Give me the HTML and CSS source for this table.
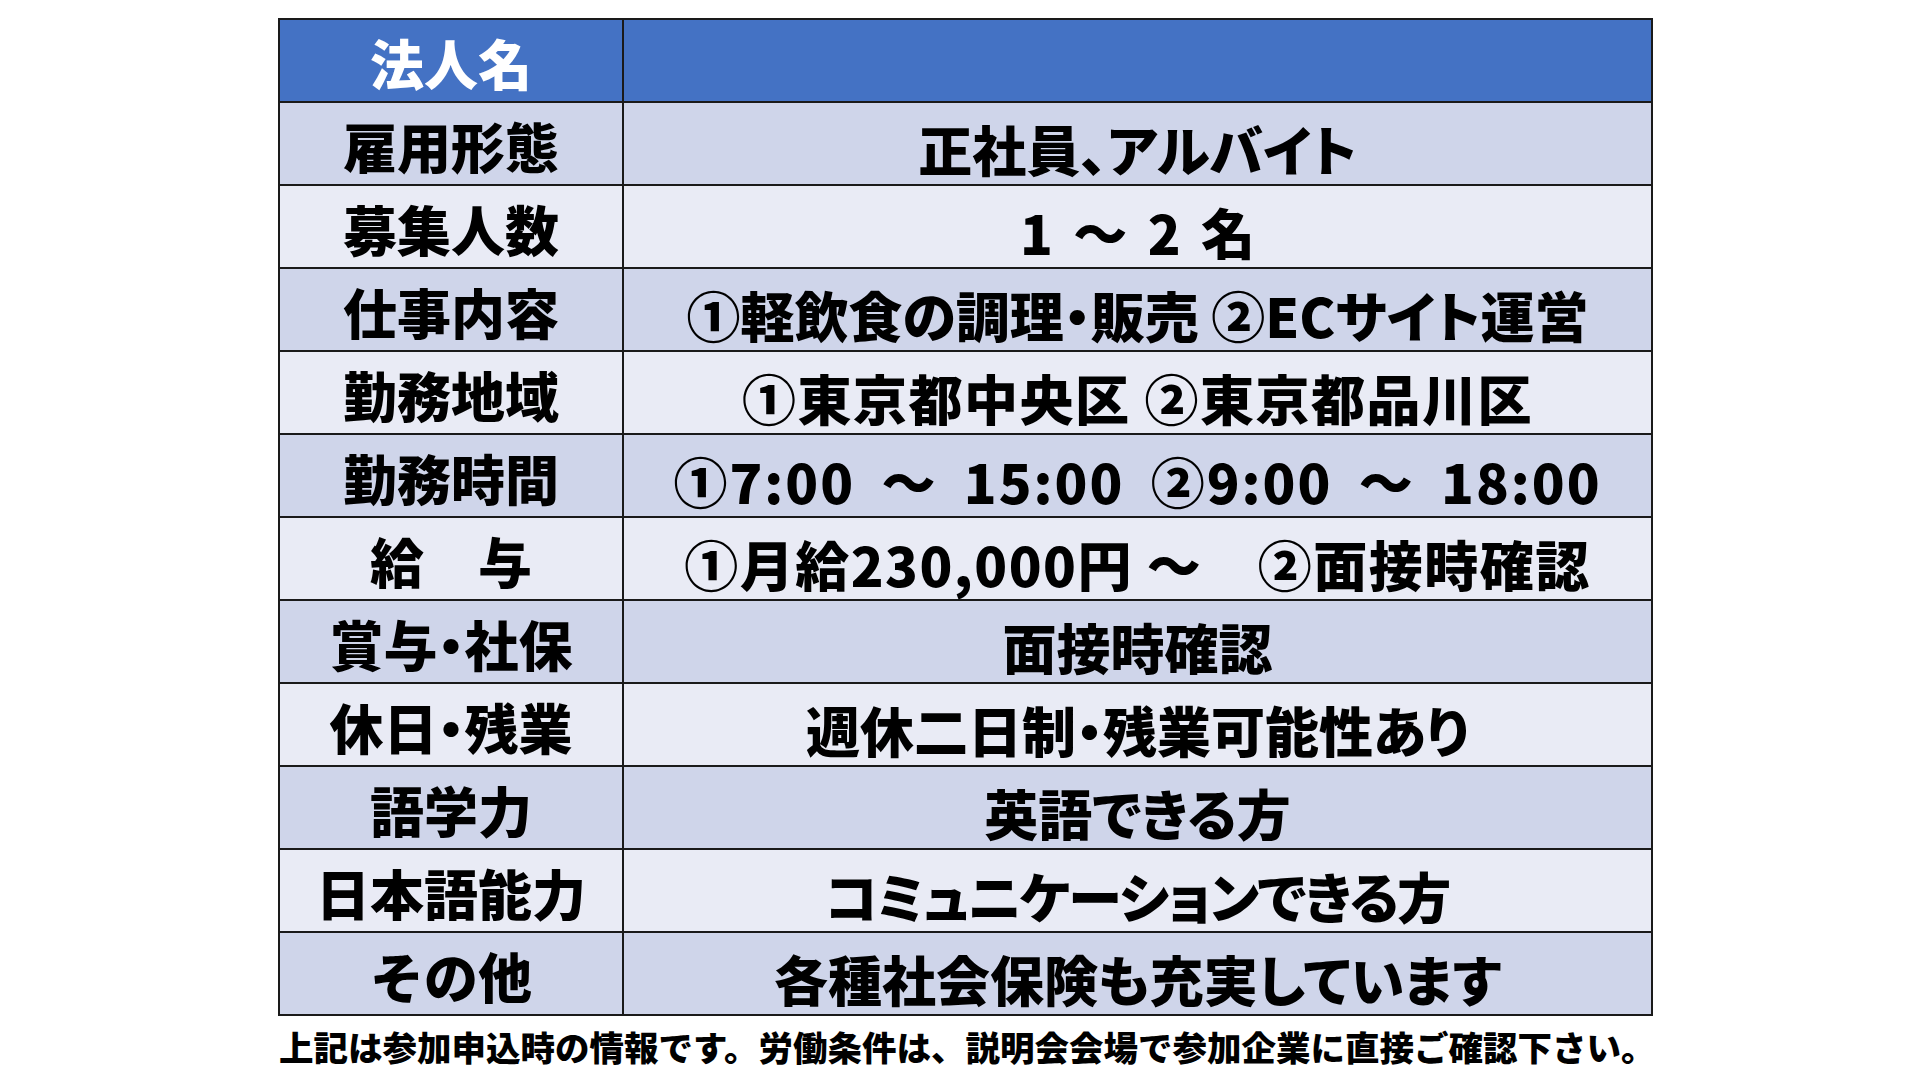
FILE: index.html
```html
<!DOCTYPE html>
<html lang="ja">
<head>
<meta charset="utf-8">
<title>求人情報</title>
<link rel="stylesheet" href="styles.css">
</head>
<body>
<div class="page">
  <table class="job">
    <tr class="head"><th class="label">法人名</th><td class="value"></td></tr>
    <tr class="dark"><th class="label">雇用形態</th><td class="value">正社員、アルバイト</td></tr>
    <tr class="light"><th class="label">募集人数</th><td class="value spaced">1 ～ 2 名</td></tr>
    <tr class="dark"><th class="label">仕事内容</th><td class="value">①軽飲食の調理・販売 ②ECサイト運営</td></tr>
    <tr class="light"><th class="label">勤務地域</th><td class="value wide">①東京都中央区 ②東京都品川区</td></tr>
    <tr class="dark"><th class="label">勤務時間</th><td class="value times">①7:00 ～ 15:00 ②9:00 ～ 18:00</td></tr>
    <tr class="light"><th class="label">給　与</th><td class="value wide">①月給230,000円 ～　②面接時確認</td></tr>
    <tr class="dark"><th class="label">賞与<span class="dot">・</span>社保</th><td class="value">面接時確認</td></tr>
    <tr class="light"><th class="label">休日<span class="dot">・</span>残業</th><td class="value">週休二日制・残業可能性あり</td></tr>
    <tr class="dark"><th class="label">語学力</th><td class="value">英語できる方</td></tr>
    <tr class="light"><th class="label">日本語能力</th><td class="value narrow">コミュニケーションできる方</td></tr>
    <tr class="dark"><th class="label">その他</th><td class="value">各種社会保険も充実しています</td></tr>
  </table>
  <p class="note">上記は参加申込時の情報です。労働条件は、説明会会場で参加企業に直接ご確認下さい。</p>
</div>
</body>
</html>
```
FILE: styles.css
```css
html, body {
  margin: 0;
  padding: 0;
  background: #ffffff;
}
.page {
  width: 1920px;
  height: 1080px;
  padding: 18px 0 0 278px;
  box-sizing: border-box;
  font-family: "Noto Sans CJK JP", "Noto Sans", sans-serif;
  font-weight: 900;
  color: #000;
}
.job {
  border-collapse: collapse;
  width: 1375px;
  table-layout: fixed;
}
.job tr {
  height: 83px;
}
.job th, .job td {
  border: 2px solid #1a1a1a;
  padding: 0;
  text-align: center;
  vertical-align: middle;
  font-size: 54px;
  line-height: 1;
  white-space: nowrap;
  font-weight: 900;
}
.job .label {
  width: 342px;
  padding-top: 4px;
}
.job .value {
  padding-top: 11px;
  font-feature-settings: "palt";
}
.dot {
  font-feature-settings: "palt";
}
.spaced {
  word-spacing: 8px;
}
.times {
  letter-spacing: 2px;
  word-spacing: 12px;
}
.wide {
  letter-spacing: 1.5px;
}
.narrow {
  letter-spacing: -1.5px;
}
.head th, .head td {
  background: #4472c4;
  color: #ffffff;
}
.dark th, .dark td {
  background: #cfd5ea;
}
.light th, .light td {
  background: #e9ebf5;
}
.note {
  margin: 8px 0 0 1px;
  font-size: 34.5px;
  line-height: 44px;
  font-weight: 900;
  white-space: nowrap;
}
```
